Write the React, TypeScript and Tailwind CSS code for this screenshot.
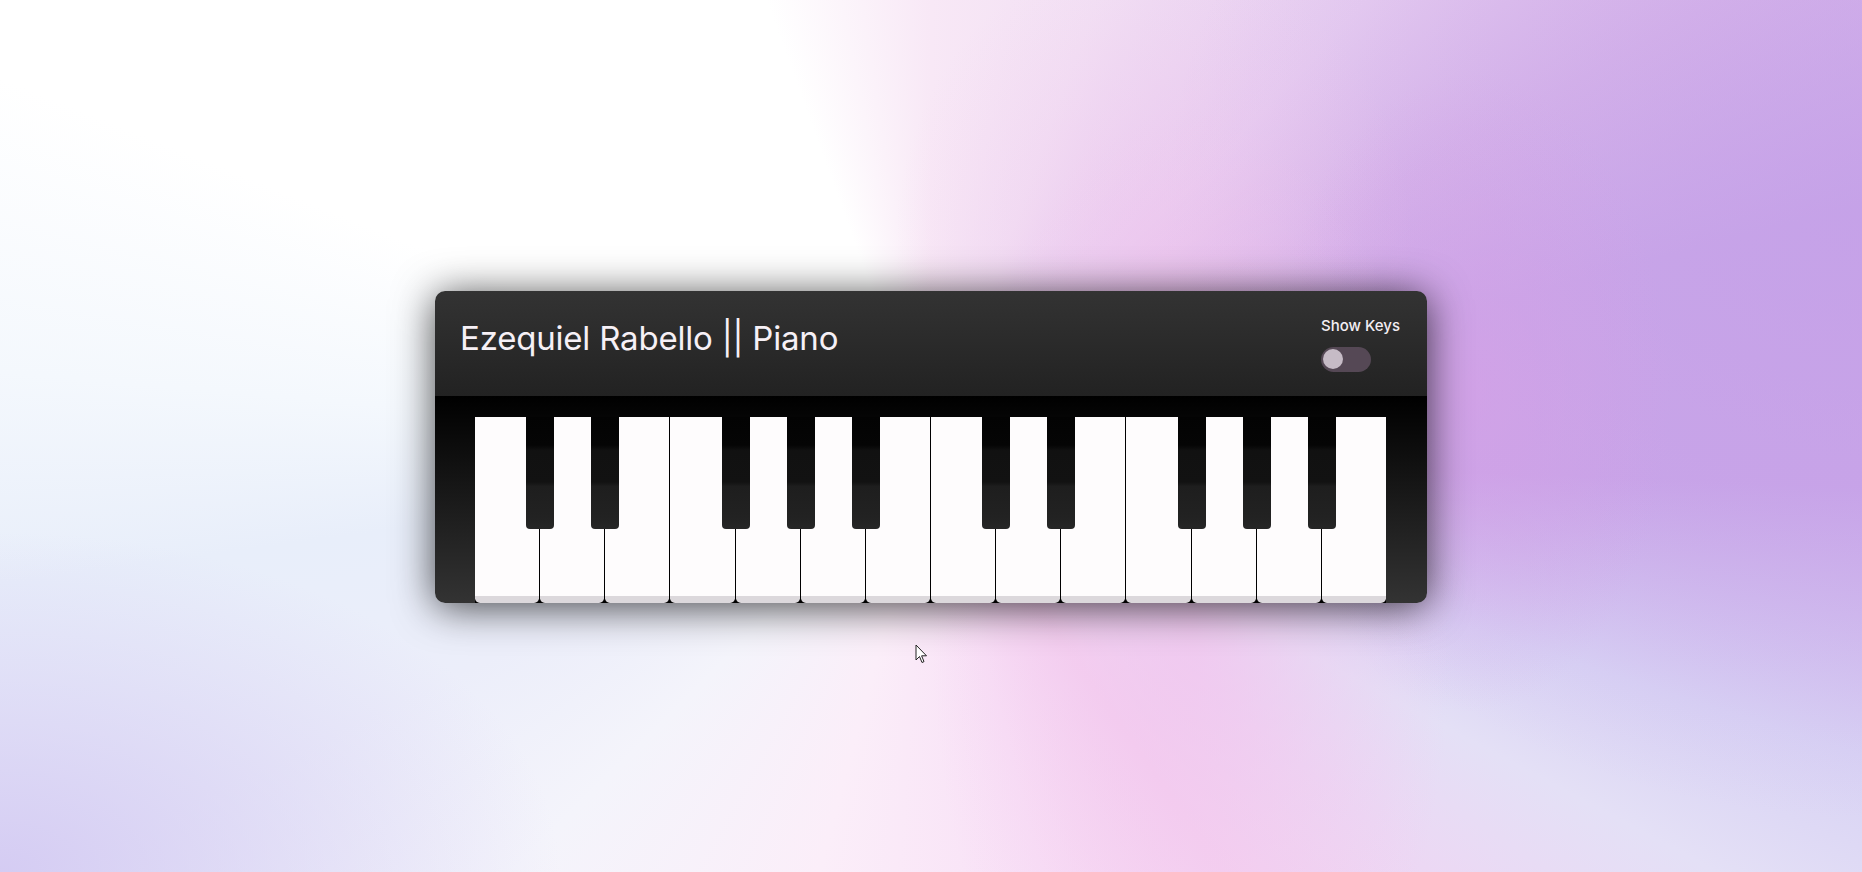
import React, { useState } from 'react';

const WHITE_KEYS = ['C', 'D', 'E', 'F', 'G', 'A', 'B', 'C', 'D', 'E', 'F', 'G', 'A', 'B'];
// a black key sits after C, D, F, G and A
const HAS_BLACK = (note: string) => ['C', 'D', 'F', 'G', 'A'].includes(note);

const Toggle: React.FC<{ on: boolean; onChange: () => void }> = ({ on, onChange }) => (
  <button
    onClick={onChange}
    className={`w-[50px] h-[25px] rounded-full flex items-center px-[2px] transition-colors ${on ? 'bg-[#8a5bb0] justify-end' : 'bg-[#554855] justify-start'}`}
  >
    <span className="w-[20px] h-[20px] rounded-full bg-[#c6bbc6] block" />
  </button>
);

export default function App() {
  const [showKeys, setShowKeys] = useState(false);

  return (
    <div
      className="relative w-full h-[872px] overflow-hidden flex items-center justify-center pt-[22px] bg-[radial-gradient(ellipse_260px_520px_at_64%_72%,rgba(242,196,238,0.75)_0%,rgba(242,196,238,0.35)_50%,transparent_100%),radial-gradient(ellipse_200px_320px_at_79%_45%,rgba(214,160,230,0.6)_0%,transparent_100%),radial-gradient(ellipse_260px_300px_at_62%_28%,rgba(240,200,238,0.55)_0%,transparent_100%),radial-gradient(ellipse_700px_600px_at_100%_25%,rgba(192,156,232,0.5)_0%,transparent_100%),radial-gradient(ellipse_560px_340px_at_0%_100%,rgba(210,200,242,0.9)_0%,transparent_100%),conic-gradient(from_0deg_at_50%_52%,#f8e8f6_0deg,#f2e0f4_20deg,#e6ccf0_44deg,#d8b6ea_60deg,#cba8e8_75deg,#caa6e8_92deg,#d8d2f4_108deg,#e4e0f6_118deg,#ecd8f4_130deg,#f4d2f0_145deg,#f8e0f6_165deg,#fbeef9_195deg,#f4f4fb_225deg,#eceefa_245deg,#e8eefa_262deg,#f4f8fd_275deg,#ffffff_292deg,#ffffff_340deg,#f8e8f6_360deg)]"
      style={{ fontFamily: 'Inter, "Noto Sans", sans-serif' }}
    >
      <div className="w-[992px] rounded-[10px] overflow-hidden shadow-[0_4px_40px_rgba(0,0,0,0.72)]">
        <header className="h-[105px] pl-[25px] pr-[27px] flex items-center justify-between bg-[linear-gradient(#333333,#222222)]">
          <h1 className="text-[33px] font-normal tracking-[-0.2px] text-[#f6f0f6] leading-none pb-[10px]">
            Ezequiel Rabello || Piano
          </h1>
          <div className="flex flex-col items-start gap-[11px]">
            <span className="text-[15px] font-medium text-[#f3eef3] leading-[20px]">Show Keys</span>
            <Toggle on={showKeys} onChange={() => setShowKeys(v => !v)} />
          </div>
        </header>

        <div className="h-[207px] pt-[21px] pl-[40px] pr-[41px] bg-[linear-gradient(#000000,#333333)]">
          <div className="h-full flex gap-px bg-black">
            {WHITE_KEYS.map((note, i) => (
              <div
                key={i}
                className="relative flex-1 h-full rounded-b-[5px] bg-[#fefcfd] border-b-[7px] border-[#dcd8dc] flex items-end justify-center"
              >
                {showKeys && (
                  <span className="mb-2 text-[13px] text-[#555] font-medium">{note}</span>
                )}
                {HAS_BLACK(note) && (
                  <div className="absolute z-10 top-0 -right-[15px] w-[28px] h-[112px] rounded-b-[4px] bg-[linear-gradient(#030303_0%,#050505_25%,#111111_30%,#121212_58%,#1e1e1e_62%,#222222_90%,#262626_100%)]" />
                )}
              </div>
            ))}
          </div>
        </div>
      </div>

      {/* mouse pointer captured in the shot */}
      <svg className="absolute left-[915px] top-[644px]" width="13" height="21" viewBox="0 0 13 21">
        <path d="M1 1 L1 16 L4.5 12.5 L7 18.5 L9 17.6 L6.6 11.8 L11.5 11.8 Z" fill="white" stroke="#222" strokeWidth="1" strokeLinejoin="round" />
      </svg>
    </div>
  );
}
